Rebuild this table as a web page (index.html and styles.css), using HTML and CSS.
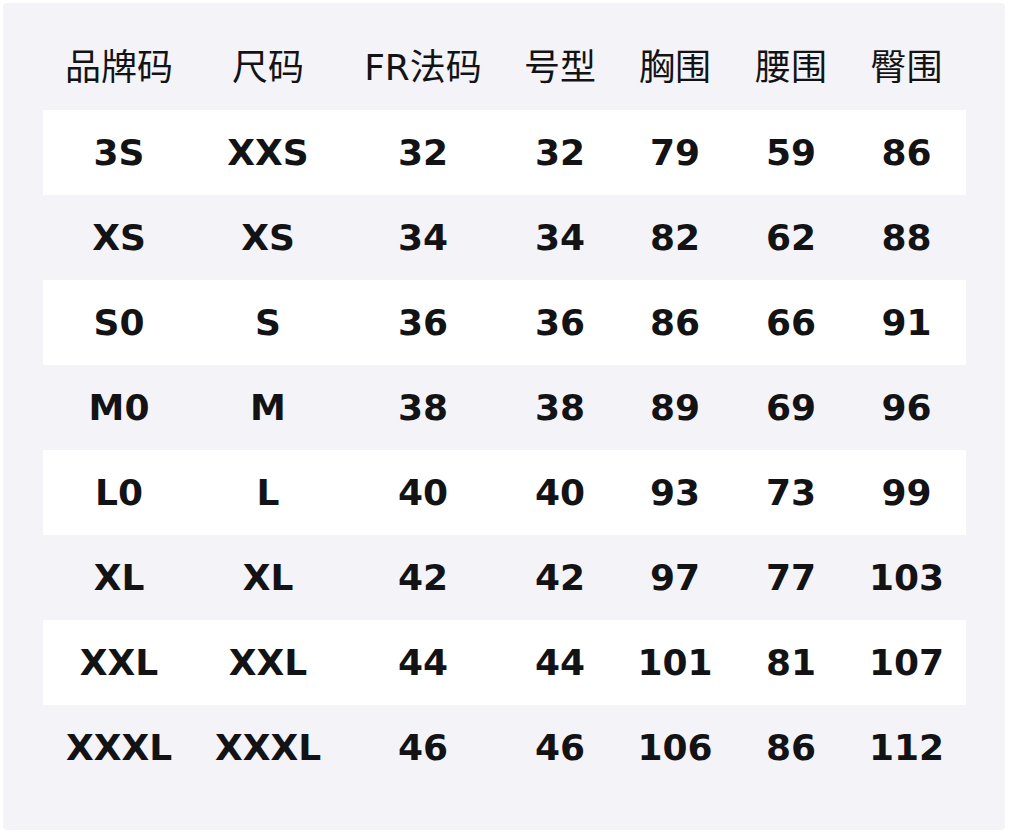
FILE: index.html
```html
<!DOCTYPE html>
<html lang="zh">
<head>
<meta charset="utf-8">
<title>尺码表</title>
<link rel="stylesheet" href="styles.css">
</head>
<body>
<div class="panel">
  <table class="size-table">
    <colgroup>
      <col class="c1"><col class="c2"><col class="c3"><col class="c4"><col class="c5"><col class="c6"><col class="c7">
    </colgroup>
    <thead>
      <tr><th>品牌码</th><th>尺码</th><th>FR法码</th><th>号型</th><th>胸围</th><th>腰围</th><th>臀围</th></tr>
    </thead>
    <tbody>
      <tr class="odd"><td>3S</td><td>XXS</td><td>32</td><td>32</td><td>79</td><td>59</td><td>86</td></tr>
      <tr><td>XS</td><td>XS</td><td>34</td><td>34</td><td>82</td><td>62</td><td>88</td></tr>
      <tr class="odd"><td>S0</td><td>S</td><td>36</td><td>36</td><td>86</td><td>66</td><td>91</td></tr>
      <tr><td>M0</td><td>M</td><td>38</td><td>38</td><td>89</td><td>69</td><td>96</td></tr>
      <tr class="odd"><td>L0</td><td>L</td><td>40</td><td>40</td><td>93</td><td>73</td><td>99</td></tr>
      <tr><td>XL</td><td>XL</td><td>42</td><td>42</td><td>97</td><td>77</td><td>103</td></tr>
      <tr class="odd"><td>XXL</td><td>XXL</td><td>44</td><td>44</td><td>101</td><td>81</td><td>107</td></tr>
      <tr><td>XXXL</td><td>XXXL</td><td>46</td><td>46</td><td>106</td><td>86</td><td>112</td></tr>
    </tbody>
  </table>
</div>
</body>
</html>
```
FILE: styles.css
```css
html, body {
  margin: 0;
  padding: 0;
  background: #ffffff;
}
body {
  padding: 3px;
  width: 1009px;
  height: 833px;
  box-sizing: border-box;
}
.panel {
  width: 1002px;
  height: 827px;
  background: #f3f3f8;
  border-radius: 4px;
  padding: 21px 0 0 40px;
  box-sizing: border-box;
}
.size-table {
  border-collapse: collapse;
  table-layout: fixed;
  width: 923px;
  font-family: "DejaVu Sans", "Noto Sans CJK SC", sans-serif;
  color: #131316;
}
.c1 { width: 152px; }
.c2 { width: 146px; }
.c3 { width: 164px; }
.c4 { width: 110px; }
.c5 { width: 120px; }
.c6 { width: 112px; }
.c7 { width: 119px; }
.size-table th,
.size-table td {
  height: 85px;
  padding: 0;
  text-align: center;
  vertical-align: middle;
  white-space: nowrap;
}
.size-table th {
  height: 86px;
  font-weight: normal;
  font-size: 36px;
  padding-bottom: 6px;
  box-sizing: border-box;
}
.size-table td {
  font-weight: bold;
  font-size: 36px;
}
.size-table tr.odd td {
  background: #ffffff;
}
```
